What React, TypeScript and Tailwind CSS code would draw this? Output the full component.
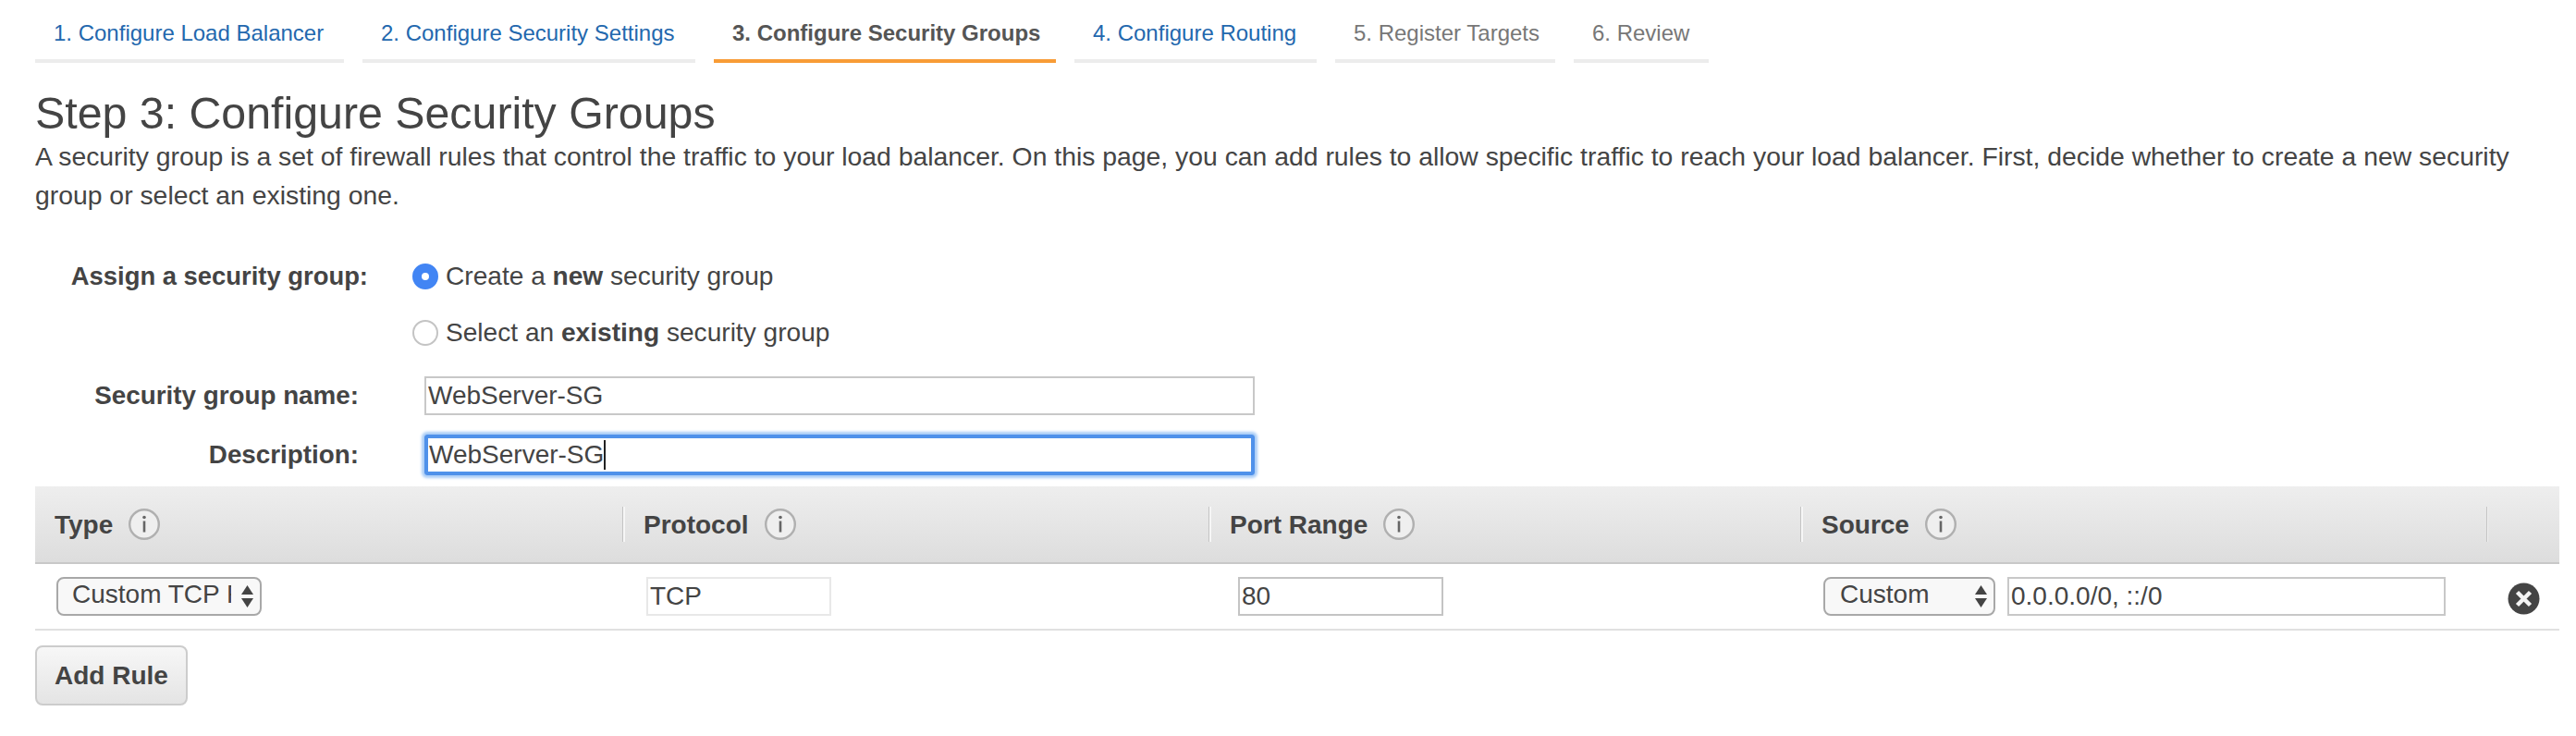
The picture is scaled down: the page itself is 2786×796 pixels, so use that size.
const tabs = [
	{ label: "1. Configure Load Balancer", state: "link", width: "w-[334px]" },
	{ label: "2. Configure Security Settings", state: "link", width: "w-[360px]" },
	{ label: "3. Configure Security Groups", state: "active", width: "w-[370px]" },
	{ label: "4. Configure Routing", state: "link", width: "w-[262px]" },
	{ label: "5. Register Targets", state: "off", width: "w-[238px]" },
	{ label: "6. Review", state: "off", width: "w-[146px]" },
];

function InfoIcon() {
	return (
		<svg width="34" height="34" viewBox="0 0 34 34" className="shrink-0">
			<circle cx="17" cy="17" r="15.8" fill="#efefef" stroke="#b0b0b0" strokeWidth="2.4" />
			<circle cx="17" cy="9.5" r="1.8" fill="#666" />
			<rect x="15.7" y="13.5" width="2.6" height="12" fill="#666" />
		</svg>
	);
}

function SelectArrows() {
	return (
		<svg width="13" height="24" viewBox="0 0 13 24" className="absolute right-[9px] top-[9px] pointer-events-none">
			<path d="M6.5 0 L13 10 L0 10 Z" fill="#444" />
			<path d="M6.5 24 L13 14 L0 14 Z" fill="#444" />
		</svg>
	);
}

function HeaderCell({ label, sep = true }: { label: string; sep?: boolean }) {
	return (
		<div className="flex items-center h-[38px]">
			{sep && <div className="w-[3px] h-[38px] border-l border-[#c4c4c4] bg-[#f6f6f6] mr-[20px]" />}
			<span className="font-bold text-[28px] text-[#444] pt-[2px]">{label}</span>
			<span className="ml-[17px]">
				<InfoIcon />
			</span>
		</div>
	);
}

export default function App() {
	return (
		<div className="w-[2786px] h-[796px] overflow-hidden bg-white text-[#444] font-['Liberation_Sans',Arial,sans-serif]">
			{/* Wizard steps */}
			<div className="flex gap-5 pl-[38px]">
				{tabs.map((t) => (
					<div
						key={t.label}
						className={
							t.width +
							" h-[68px] px-5 pt-[20px] text-[24px] leading-[32px] border-b-4 whitespace-nowrap " +
							(t.state === "active"
								? "border-[#f89c36] font-bold text-[#555]"
								: t.state === "link"
									? "border-[#ececec] text-[#2368ae]"
									: "border-[#ececec] text-[#777]")
						}
					>
						{t.label}
					</div>
				))}
			</div>

			{/* Title */}
			<div className="pl-[38px]">
				<h1 className="text-[48.3px] leading-[56px] mt-[26px] text-[#444]">Step 3: Configure Security Groups</h1>
				<p className="text-[28.35px] leading-[42px] -mt-[2px] w-[2700px]">
					A security group is a set of firewall rules that control the traffic to your load balancer. On this page, you can add rules to allow specific traffic to reach your load balancer. First, decide whether to create a new security group or select an existing one.
				</p>
			</div>

			{/* Assign */}
			<div className="flex pl-[38px] mt-[46px]">
				<div className="w-[360px] text-right font-bold text-[27.4px] leading-[42px] mr-[48px]">Assign a security group:</div>
				<div className="flex flex-col gap-[19px]">
					<label className="flex items-center h-[42px] text-[28.1px]">
						<input type="radio" name="sg" defaultChecked className="appearance-none w-[28px] h-[28px] rounded-full bg-white border-[10px] border-[#4285f4] mr-[8px]" />
						<span>
							Create a <b>new</b> security group
						</span>
					</label>
					<label className="flex items-center h-[42px] text-[28.1px]">
						<input type="radio" name="sg" className="appearance-none w-[28px] h-[28px] rounded-full bg-white border-2 border-[#c4c4c4] mr-[8px]" />
						<span>
							Select an <b>existing</b> security group
						</span>
					</label>
				</div>
			</div>

			{/* Name + description */}
			<div className="flex pl-[38px] mt-[26px] items-center">
				<div className="w-[350px] text-right font-bold text-[27.8px] mr-[71px]">Security group name:</div>
				<input readOnly value="WebServer-SG" className="w-[898px] h-[42px] border-2 border-[#c8c8c8] px-[2px] text-[28px] text-[#444] outline-none" />
			</div>
			<div className="flex pl-[38px] mt-[21px] items-center">
				<div className="w-[350px] text-right font-bold text-[27.8px] mr-[71px]">Description:</div>
				<div className="w-[898px] h-[44px] flex items-center border-[4px] border-[#4f91ea] rounded-[3px] shadow-[0_0_3px_3px_#a9cdf7] pl-[1px] text-[28px] text-[#444]">
					WebServer-SG
					<span className="inline-block w-[2px] h-[32px] bg-[#222]" />
				</div>
			</div>

			{/* Rules table */}
			<div className="ml-[38px] w-[2730px] mt-[12px]">
				<div className="grid grid-cols-[635px_634px_640px_742px_79px] items-center h-[84px] bg-gradient-to-b from-[#eeeeee] to-[#dddddd] border-b-2 border-[#c8c8c8]">
					<div className="pl-[21px]">
						<HeaderCell label="Type" sep={false} />
					</div>
					<HeaderCell label="Protocol" />
					<HeaderCell label="Port Range" />
					<HeaderCell label="Source" />
					<div className="h-[38px] w-[2px] border-l border-[#c4c4c4] bg-[#f0f0f0]" />
				</div>
				<div className="grid grid-cols-[635px_634px_640px_742px_79px] items-center h-[72px] border-b-2 border-[#e0e0e0]">
					<div className="pl-[23px]">
						<div className="relative w-[222px]">
							<select className="appearance-none w-[222px] h-[42px] rounded-[8px] border-2 border-[#a8a8a8] bg-[#f8f8f8] pl-[15px] pr-[31px] pb-[5px] leading-[30px] text-[28px] text-[#444] outline-none">
								<option>Custom TCP Rule</option>
							</select>
							<SelectArrows />
						</div>
					</div>
					<div className="pl-[26px]">
						<input readOnly value="TCP" className="w-[200px] h-[42px] border-2 border-[#e8e8e8] px-[2px] text-[28px] text-[#444] outline-none" />
					</div>
					<div className="pl-[32px]">
						<input readOnly value="80" className="w-[222px] h-[42px] border-2 border-[#c4c4c4] px-[2px] text-[28px] text-[#444] outline-none" />
					</div>
					<div className="pl-[25px] flex items-center gap-[13px]">
						<div className="relative w-[186px]">
							<select className="appearance-none w-[186px] h-[42px] rounded-[8px] border-2 border-[#a8a8a8] bg-[#f8f8f8] pl-[16px] pr-[26px] pb-[5px] leading-[30px] text-[28px] text-[#444] outline-none">
								<option>Custom</option>
							</select>
							<SelectArrows />
						</div>
						<input readOnly value="0.0.0.0/0, ::/0" className="w-[474px] h-[42px] border-2 border-[#c8c8c8] px-[2px] text-[28px] text-[#444] outline-none" />
					</div>
					<div className="pl-[23px]">
						<svg width="35" height="35" viewBox="0 0 35 35" className="mt-[4px]">
							<circle cx="17.5" cy="17.5" r="17" fill="#444" />
							<path d="M10.5 10.5 L24.5 24.5 M24.5 10.5 L10.5 24.5" stroke="#f4f4f4" strokeWidth="4.5" />
						</svg>
					</div>
				</div>
				<button className="mt-[16px] w-[165px] h-[65px] rounded-[8px] border-2 border-[#cccccc] bg-gradient-to-b from-[#f7f7f7] to-[#e4e4e4] font-bold text-[28px] text-[#444]">
					Add Rule
				</button>
			</div>
		</div>
	);
}
